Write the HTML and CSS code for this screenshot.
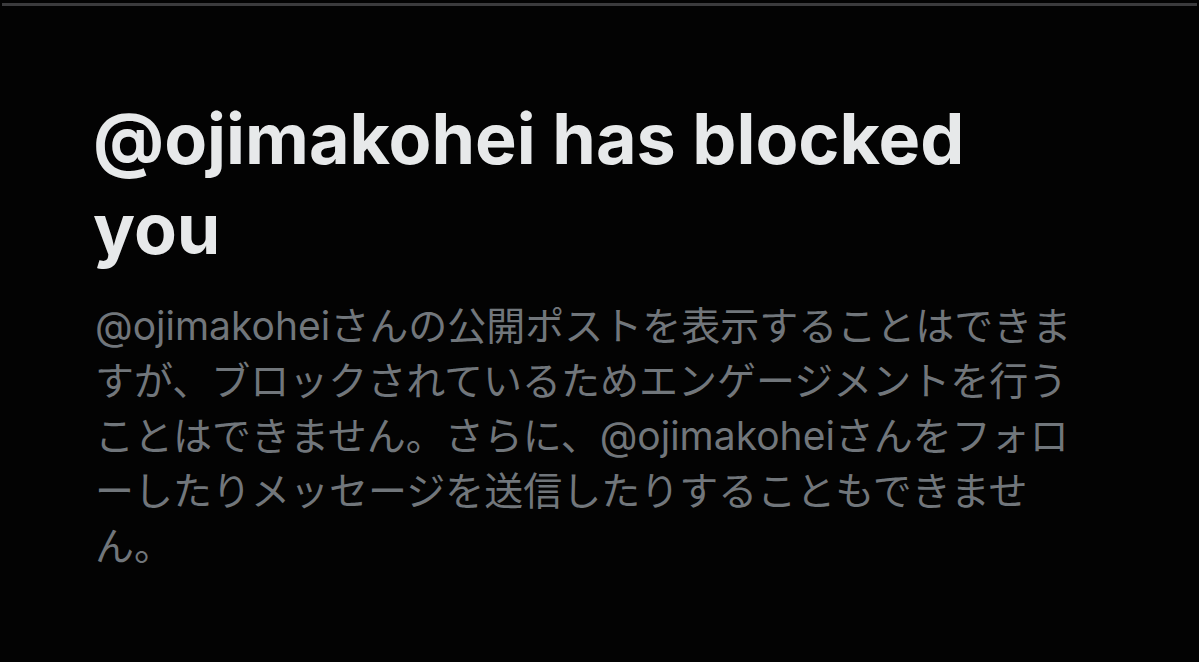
FILE: index.html
```html
<!DOCTYPE html>
<html lang="ja">
<head>
<meta charset="utf-8">
<link rel="stylesheet" href="styles.css">
<title>Blocked</title>
</head>
<body>
<div class="topbar"></div>
<main class="content">
  <h1 class="title">@ojimakohei has blocked you</h1>
  <p class="desc">@ojimakoheiさんの公開ポストを表示することはできますが、ブロックされているためエンゲージメントを行うことはできません。さらに、@ojimakoheiさんをフォローしたりメッセージを送信したりすることもできません。</p>
</main>
</body>
</html>
```
FILE: styles.css
```css
html, body {
  margin: 0;
  padding: 0;
  background: #030303;
  height: 100%;
}
body {
  overflow: hidden;
}
.topbar {
  height: 3px;
  margin: 3px 2px 0 2px;
  background: #3b3b3d;
}
.content {
  padding: 88px 0 0 93px;
  width: 992px;
}
.title {
  margin: 0;
  font-family: "Inter", "Liberation Sans", sans-serif;
  font-weight: 700;
  font-size: 70px;
  line-height: 90px;
  letter-spacing: 0;
  color: #e7e9ea;
}
.desc {
  margin: 24px 0 0 2px;
  font-family: "Inter", "Noto Sans CJK JP", sans-serif;
  font-weight: 400;
  font-size: 39px;
  line-height: 55px;
  color: #71767b;
  line-break: normal;
}
```
